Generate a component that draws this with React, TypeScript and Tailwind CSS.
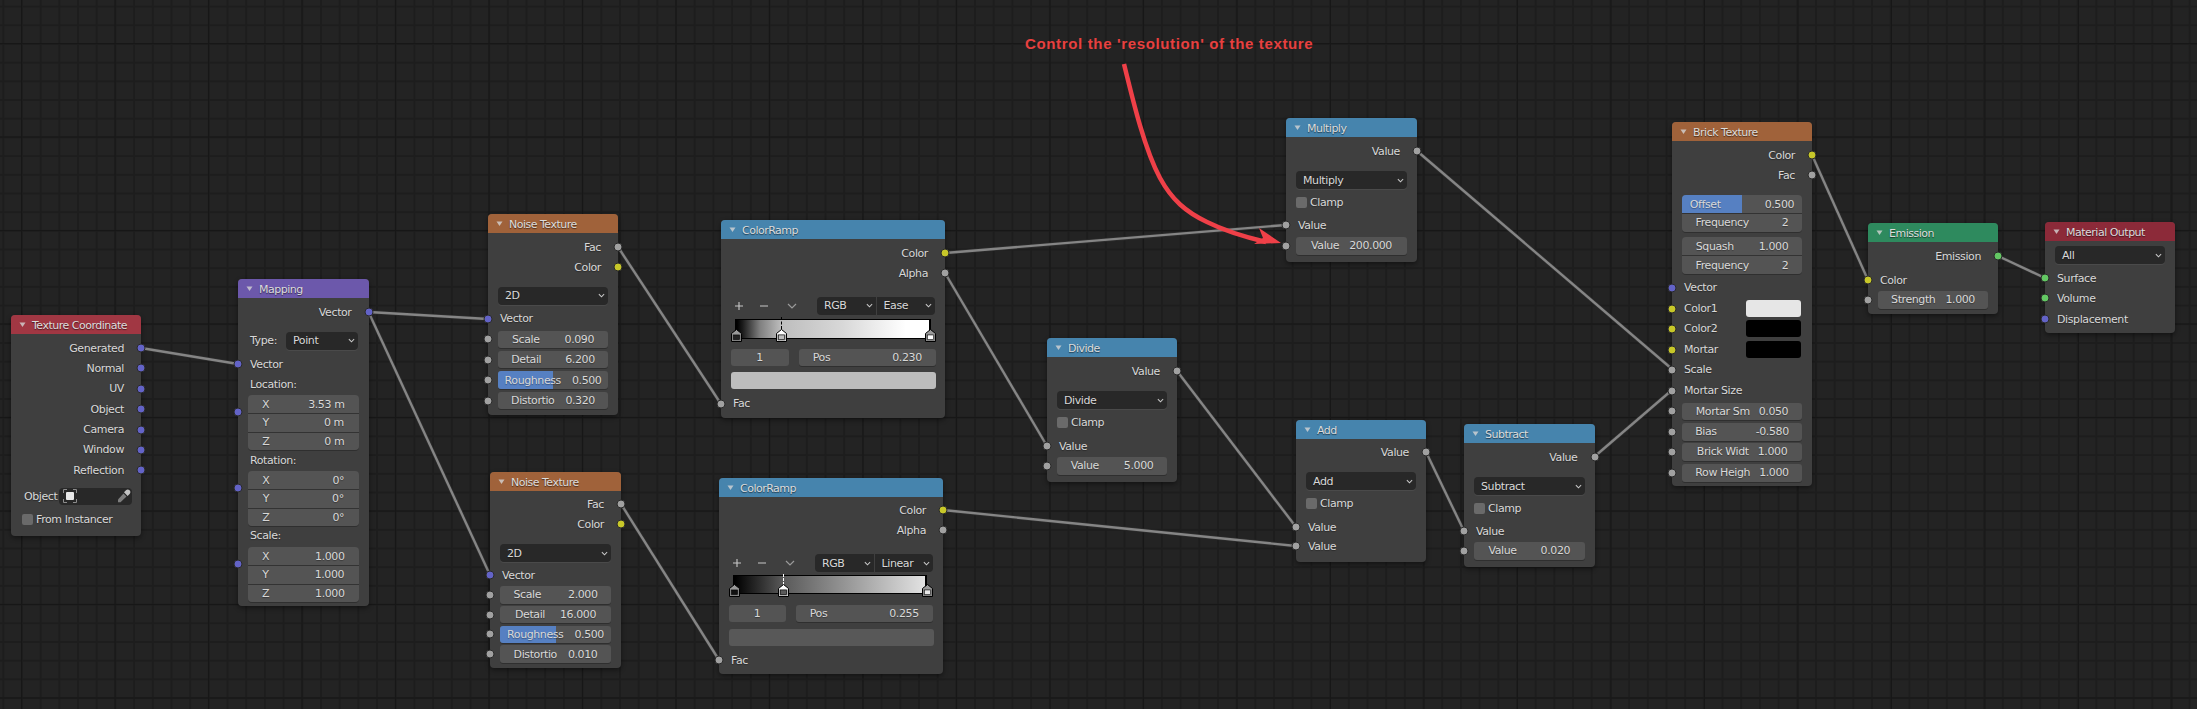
import React from "react";

const SOCK = {
  v: "bg-[#6363c7]",
  g: "bg-[#a1a1a1]",
  y: "bg-[#c7c729]",
  s: "bg-[#63c763]",
} as const;
type S = keyof typeof SOCK;

const GAP = "mt-[2.4px]";

function Sock({ c, side = "l", cls = "top-1/2" }: { c: S; side?: "l" | "r"; cls?: string }) {
  return (
    <span
      className={`absolute ${cls} ${side === "l" ? "left-0 -translate-x-1/2" : "right-0 translate-x-1/2"} -translate-y-1/2 w-[9px] h-[9px] rounded-full border border-[#2a2a2a] ${SOCK[c]} z-10`}
    />
  );
}

function Tri() {
  return (
    <svg width="7" height="7" viewBox="0 0 7 7" className="shrink-0">
      <path d="M0.5 1.5H6.5L3.5 6Z" fill="#d4d4d4" fillOpacity="0.8" />
    </svg>
  );
}

function Chev({ color = "#c8c8c8", size = 7 }: { color?: string; size?: number }) {
  return (
    <svg width={size} height={size} viewBox="0 0 8 8" className="shrink-0">
      <path d="M1 2.5L4 5.5L7 2.5" fill="none" stroke={color} strokeWidth="1.2" />
    </svg>
  );
}

function Node({
  pos,
  head,
  title,
  children,
}: {
  pos: string;
  head: string;
  title: string;
  children: React.ReactNode;
}) {
  return (
    <div className={`absolute ${pos} flex flex-col rounded-[4px] bg-[#3f3f3f] shadow-[0_2px_5px_rgba(0,0,0,0.45)]`}>
      <div className={`h-[19px] shrink-0 flex items-center gap-[6px] pl-[8px] rounded-t-[4px] ${head}`}>
        <Tri />
        <span className="text-[#dcdcdc] whitespace-nowrap pt-[1px] tracking-[-0.5px] [text-shadow:0_1px_1px_rgba(0,0,0,0.55)]">{title}</span>
      </div>
      {children}
    </div>
  );
}

function Out({ label, c, cls = GAP }: { label: string; c: S; cls?: string }) {
  return (
    <div className={`relative h-[18px] shrink-0 flex items-center justify-end pr-[17px] ${cls}`}>
      <span className="whitespace-nowrap">{label}</span>
      <Sock c={c} side="r" />
    </div>
  );
}

function In({ label, c, cls = GAP, children }: { label: string; c?: S; cls?: string; children?: React.ReactNode }) {
  return (
    <div className={`relative h-[18px] shrink-0 flex items-center pl-[12px] ${cls}`}>
      <span className="whitespace-nowrap">{label}</span>
      {children}
      {c && <Sock c={c} />}
    </div>
  );
}

function Field({
  label,
  value,
  gap,
  cut = "rounded-[3px] shadow-[0_1px_0_rgba(0,0,0,0.25)]",
  fill,
}: {
  label?: string;
  value: string;
  gap: string;
  cut?: string;
  fill?: boolean;
}) {
  return (
    <div className={`relative flex-1 min-w-0 h-[17.4px] bg-[#545454] flex items-center justify-center overflow-hidden ${gap} ${cut}`}>
      {fill && <span className="absolute left-0 top-0 bottom-0 w-1/2 bg-[#5680c2]" />}
      {label && <span className="relative whitespace-nowrap">{label}</span>}
      <span className="relative whitespace-nowrap">{value}</span>
    </div>
  );
}

function FRow({
  label,
  value,
  gap,
  cls = GAP,
  c = "g",
  fill,
}: {
  label: string;
  value: string;
  gap: string;
  cls?: string;
  c?: S;
  fill?: boolean;
}) {
  return (
    <div className={`relative h-[18px] shrink-0 flex items-center px-[10px] ${cls}`}>
      <Field label={label} value={value} gap={gap} fill={fill} />
      <Sock c={c} />
    </div>
  );
}

function Stack({
  rows,
  cls,
  c,
  itemH = "h-[18.33px]",
}: {
  rows: { l: string; v: string; g: string; fill?: boolean }[];
  cls: string;
  c?: S;
  itemH?: string;
}) {
  return (
    <div className={`relative shrink-0 px-[10px] ${cls}`}>
      <div className="flex flex-col rounded-[4px] overflow-hidden shadow-[0_1px_0_rgba(0,0,0,0.25)]">
        {rows.map((r, i) => (
          <div key={i} className={`flex items-stretch ${itemH} ${i > 0 ? "border-t border-[#333]" : ""}`}>
            <div className="relative flex-1 min-w-0 bg-[#545454] flex items-center justify-center overflow-hidden">
              {r.fill && <span className="absolute left-0 top-0 bottom-0 w-1/2 bg-[#5680c2]" />}
              <span className={`relative flex items-center ${r.g}`}>
                <span className="whitespace-nowrap">{r.l}</span>
                <span className="whitespace-nowrap">{r.v}</span>
              </span>
            </div>
          </div>
        ))}
      </div>
      {c && <Sock c={c} cls="top-[17px]" />}
    </div>
  );
}

function DD({ label, cls = "" }: { label: string; cls?: string }) {
  return (
    <div className={`h-[18px] rounded-[4px] bg-[#282828] flex items-center justify-between pl-[7px] pr-[3px] shadow-[0_1px_0_rgba(255,255,255,0.06)] ${cls}`}>
      <span className="whitespace-nowrap">{label}</span>
      <Chev />
    </div>
  );
}

function DRow({ label, cls }: { label: string; cls: string }) {
  return (
    <div className={`shrink-0 px-[10px] ${cls}`}>
      <DD label={label} />
    </div>
  );
}

function Check({ label, cls = "mt-[4px]" }: { label: string; cls?: string }) {
  return (
    <div className={`h-[18px] shrink-0 flex items-center gap-[3px] pl-[10px] ${cls}`}>
      <span className="w-[11px] h-[11px] rounded-[2px] bg-[#6a6a6a]" />
      <span className="whitespace-nowrap">{label}</span>
    </div>
  );
}

function Handle({ active, color, pos }: { active?: boolean; color: string; pos: string }) {
  return (
    <svg width="11" height="13" viewBox="0 0 11 13" className={`absolute ${pos}`}>
      <path d="M5.5 0.5L10.5 4.5V12.5H0.5V4.5Z" fill={active ? "#fff" : "#9a9a9a"} stroke="#000" strokeWidth="1" />
      <rect x="1.5" y="5.5" width="8" height="6" fill="#6a6a6a" />
      <rect x="2.5" y="6" width="6" height="4.5" fill={color} stroke="#000" strokeWidth="0.5" />
    </svg>
  );
}

function RampBar({
  width,
  h,
  cls,
  grad,
  kids,
}: {
  width: string;
  h: string;
  cls: string;
  grad: string;
  kids: React.ReactNode;
}) {
  return (
    <div className={`relative ml-[14px] shrink-0 ${width} ${h} ${cls}`}>
      <div className={`w-full h-full border-x-2 border-y border-black ${grad}`} />
      {kids}
    </div>
  );
}

function RampTools({ mode, cls, lw }: { mode: string; cls: string; lw: string }) {
  return (
    <div className={`relative h-[18px] shrink-0 flex items-center pl-[14px] pr-[10px] ${cls}`}>
      <svg width="70" height="12" viewBox="0 0 70 12" className="shrink-0">
        <path d="M4 2V10M0 6H8M25 6H33" stroke="#c8c8c8" strokeWidth="1.1" fill="none" />
        <path d="M53 4L57 8L61 4" stroke="#9a9a9a" strokeWidth="1.2" fill="none" />
      </svg>
      <div className={`ml-auto flex ${lw} rounded-[4px] overflow-hidden bg-[#282828]`}>
        <div className="flex-1 flex items-center justify-between pl-[7px] pr-[3px] h-[18px] border-r border-[#3f3f3f]">
          <span>RGB</span>
          <Chev />
        </div>
        <div className="flex-1 flex items-center justify-between pl-[7px] pr-[3px] h-[18px]">
          <span>{mode}</span>
          <Chev />
        </div>
      </div>
    </div>
  );
}

const LINKS: [number, number, number, number][] = [
  [141, 348, 238, 364],
  [368.5, 312, 488, 319],
  [368.5, 312, 490, 575],
  [618, 247, 721, 404],
  [621, 504, 719, 660],
  [945, 253, 1286, 225],
  [945, 273, 1047, 446],
  [943, 510, 1296, 546],
  [1177, 371, 1296, 527],
  [1426, 452, 1464, 531],
  [1594, 457, 1672, 390],
  [1417, 151, 1672, 369],
  [1812, 155, 1868, 280],
  [1998, 256, 2045, 278],
];

export default function App() {
  return (
    <div className="relative w-[2197px] h-[709px] overflow-hidden bg-[#232323] bg-[image:linear-gradient(#171717_1px,transparent_1px),linear-gradient(90deg,#171717_1px,transparent_1px),linear-gradient(#1d1d1d_1.5px,transparent_1.5px),linear-gradient(90deg,#1d1d1d_1.5px,transparent_1.5px)] bg-[size:93.5px_93.5px,93.5px_93.5px,18.7px_18.7px,18.7px_18.7px] bg-[position:0_43px,21px_0,0_5.6px,2.3px_0] font-['DejaVu_Sans',sans-serif] text-[11px] tracking-[-0.4px] leading-none text-[#d8d8d8] [text-shadow:0_1px_1px_rgba(0,0,0,0.35)]">
      <svg width="2197" height="709" className="absolute left-0 top-0">
        {LINKS.map(([a, b, c, d], i) => (
          <g key={i}>
            <line x1={a} y1={b} x2={c} y2={d} stroke="#2c2c2c" strokeWidth="4" />
            <line x1={a} y1={b} x2={c} y2={d} stroke="#858585" strokeWidth="2.4" />
          </g>
        ))}
      </svg>

      <Node pos="left-[11px] top-[315px] w-[130px] h-[221px]" head="bg-[#a13743]" title="Texture Coordinate">
        <Out label="Generated" c="v" cls="mt-[5px]" />
        <Out label="Normal" c="v" />
        <Out label="UV" c="v" />
        <Out label="Object" c="v" />
        <Out label="Camera" c="v" />
        <Out label="Window" c="v" />
        <Out label="Reflection" c="v" />
        <div className="h-[17px] shrink-0 flex items-center gap-[2px] pl-[13px] mt-[8.5px]">
          <span>Object</span>
          <div className="w-[73px] h-[17px] rounded-[4px] bg-[#282828] flex items-center justify-between pl-[4px] pr-[1px]">
            <svg width="14" height="14" viewBox="0 0 14 14">
              <rect x="3" y="3" width="8" height="8" rx="1" fill="#e8e8e8" />
              <path d="M0.5 4V0.5H4M10 0.5H13.5V4M13.5 10V13.5H10M4 13.5H0.5V10" fill="none" stroke="#8c8c8c" />
            </svg>
            <svg width="14" height="14" viewBox="0 0 14 14">
              <path d="M9 1.2C10 .2 11.5 .2 12.6 1.3C13.7 2.4 13.7 3.9 12.6 4.9L10.6 6.9L7 3.3Z" fill="#c4c4c4" />
              <path d="M6.5 4.5L9.5 7.5L3.5 13.2H1V10.5Z" fill="#7d7d7d" />
            </svg>
          </div>
        </div>
        <Check label="From Instancer" cls="mt-[5.5px] !pl-[11px]" />
      </Node>

      <Node pos="left-[238px] top-[279px] w-[130.5px] h-[327px]" head="bg-[#6c58ab]" title="Mapping">
        <Out label="Vector" c="v" cls="mt-[5px]" />
        <div className="h-[18px] shrink-0 mt-[10.5px] flex items-center pl-[12px] pr-[10.5px] justify-between">
          <span>Type:</span>
          <DD label="Point" cls="w-[72px]" />
        </div>
        <In label="Vector" c="v" cls="mt-[5.5px]" />
        <In label="Location:" cls="mt-[2px]" />
        <Stack
          cls="mt-[2px]"
          c="v"
          rows={[
            { l: "X", v: "3.53 m", g: "gap-[39px]" },
            { l: "Y", v: "0 m", g: "gap-[55px]" },
            { l: "Z", v: "0 m", g: "gap-[55px]" },
          ]}
        />
        <In label="Rotation:" cls="mt-[2px]" />
        <Stack
          cls="mt-[1px]"
          c="v"
          rows={[
            { l: "X", v: "0°", g: "gap-[63px]" },
            { l: "Y", v: "0°", g: "gap-[63px]" },
            { l: "Z", v: "0°", g: "gap-[63px]" },
          ]}
        />
        <In label="Scale:" cls="mt-[1px]" />
        <Stack
          cls="mt-[2px]"
          c="v"
          rows={[
            { l: "X", v: "1.000", g: "gap-[46px]" },
            { l: "Y", v: "1.000", g: "gap-[46px]" },
            { l: "Z", v: "1.000", g: "gap-[46px]" },
          ]}
        />
      </Node>

      <Node pos="left-[488px] top-[214px] w-[130px] h-[201px]" head="bg-[#a0623a]" title="Noise Texture">
        <Out label="Fac" c="g" cls="mt-[5px]" />
        <Out label="Color" c="y" />
        <DRow label="2D" cls="mt-[10.6px]" />
        <In label="Vector" c="v" cls="mt-[5px]" />
        <FRow label="Scale" value="0.090" gap="gap-[25px]" />
        <FRow label="Detail" value="6.200" gap="gap-[24px]" />
        <FRow label="Roughness" value="0.500" gap="gap-[11px]" fill />
        <FRow label="Distortio" value="0.320" gap="gap-[11px]" />
      </Node>

      <Node pos="left-[490px] top-[472px] w-[131px] h-[196px]" head="bg-[#a0623a]" title="Noise Texture">
        <Out label="Fac" c="g" cls="mt-[4px]" />
        <Out label="Color" c="y" cls="mt-[2px]" />
        <DRow label="2D" cls="mt-[11px]" />
        <In label="Vector" c="v" cls="mt-[4px]" />
        <FRow label="Scale" value="2.000" gap="gap-[27px]" cls="mt-[2px]" />
        <FRow label="Detail" value="16.000" gap="gap-[15px]" cls="mt-[1.7px]" />
        <FRow label="Roughness" value="0.500" gap="gap-[11px]" cls="mt-[1.7px]" fill />
        <FRow label="Distortio" value="0.010" gap="gap-[11px]" cls="mt-[1.7px]" />
      </Node>

      <Node pos="left-[721px] top-[220px] w-[224px] h-[198px]" head="bg-[#4684ad]" title="ColorRamp">
        <Out label="Color" c="y" cls="mt-[5px]" />
        <Out label="Alpha" c="g" cls="mt-[2px]" />
        <RampTools mode="Ease" cls="mt-[14.5px]" lw="w-[118px]" />
        <RampBar
          width="w-[196px]"
          h="h-[20px]"
          cls="mt-[4.5px]"
          grad="bg-[linear-gradient(90deg,#000_0%,#1c1c1c_3%,#808080_12%,#bdbdbd_23%,#d8d8d8_55%,#fff_88%)]"
          kids={
            <>
              <span className="absolute left-[45.5px] -top-[2px] h-[12px] border-l border-dashed border-black" />
              <Handle color="#222" pos="left-[-4px] top-[10px]" />
              <Handle color="#bdbdbd" active pos="left-[40.5px] top-[10px]" />
              <Handle color="#fff" pos="left-[189.5px] top-[10px]" />
            </>
          }
        />
        <div className="h-[18px] shrink-0 mt-[9.5px] flex gap-[10px] pl-[9.5px] pr-[9px]">
          <Field value="1" gap="" cut="rounded-[3px] !flex-none w-[58px]" />
          <Field label="Pos" value="0.230" gap="gap-[62px]" />
        </div>
        <div className="h-[17.5px] shrink-0 mt-[5px] mx-[9.5px] rounded-[3px] bg-[#bdbdbd]" />
        <In label="Fac" c="g" cls="mt-[5.5px]" />
      </Node>

      <Node pos="left-[719px] top-[478px] w-[224px] h-[196px]" head="bg-[#4684ad]" title="ColorRamp">
        <Out label="Color" c="y" cls="mt-[4px]" />
        <Out label="Alpha" c="g" cls="mt-[2px]" />
        <RampTools mode="Linear" cls="mt-[15px]" lw="w-[118px]" />
        <RampBar
          width="w-[194px]"
          h="h-[19px]"
          cls="mt-[3px]"
          grad="bg-[linear-gradient(90deg,#000_0%,#5a5a5a_25.5%,#e2e2e2_100%)]"
          kids={
            <>
              <span className="absolute left-[49.5px] -top-[1px] h-[11px] border-l border-dashed border-white" />
              <Handle color="#111" pos="left-[-4px] top-[9px]" />
              <Handle color="#5a5a5a" active pos="left-[44.5px] top-[9px]" />
              <Handle color="#e8e8e8" pos="left-[188.5px] top-[9px]" />
            </>
          }
        />
        <div className="h-[18px] shrink-0 mt-[11px] flex gap-[10px] pl-[9.5px] pr-[10px]">
          <Field value="1" gap="" cut="rounded-[3px] !flex-none w-[57px]" />
          <Field label="Pos" value="0.255" gap="gap-[62px]" />
        </div>
        <div className="h-[16.5px] shrink-0 mt-[6px] mx-[9.5px] rounded-[3px] bg-[#585858]" />
        <In label="Fac" c="g" cls="mt-[5.5px]" />
      </Node>

      <Node pos="left-[1047px] top-[338px] w-[130px] h-[144px]" head="bg-[#4684ad]" title="Divide">
        <Out label="Value" c="g" cls="mt-[5px]" />
        <DRow label="Divide" cls="mt-[11px]" />
        <Check label="Clamp" />
        <In label="Value" c="g" cls="mt-[6px]" />
        <FRow label="Value" value="5.000" gap="gap-[25px]" cls="mt-[2px]" />
      </Node>

      <Node pos="left-[1296px] top-[420px] w-[130px] h-[142px]" head="bg-[#4684ad]" title="Add">
        <Out label="Value" c="g" cls="mt-[4px]" />
        <DRow label="Add" cls="mt-[11px]" />
        <Check label="Clamp" />
        <In label="Value" c="g" cls="mt-[6px]" />
        <In label="Value" c="g" cls="mt-[1px]" />
      </Node>

      <Node pos="left-[1464px] top-[424px] w-[130.5px] h-[143px]" head="bg-[#4684ad]" title="Subtract">
        <Out label="Value" c="g" cls="mt-[5px]" />
        <DRow label="Subtract" cls="mt-[11px]" />
        <Check label="Clamp" />
        <In label="Value" c="g" cls="mt-[5px]" />
        <FRow label="Value" value="0.020" gap="gap-[24px]" cls="mt-[2px]" />
      </Node>

      <Node pos="left-[1286px] top-[118px] w-[131px] h-[144px]" head="bg-[#4684ad]" title="Multiply">
        <Out label="Value" c="g" cls="mt-[5px]" />
        <DRow label="Multiply" cls="mt-[11px]" />
        <Check label="Clamp" />
        <In label="Value" c="g" cls="mt-[5px]" />
        <FRow label="Value" value="200.000" gap="gap-[10px]" cls="mt-[3px]" />
      </Node>

      <Node pos="left-[1672px] top-[122px] w-[140px] h-[364px]" head="bg-[#a0623a]" title="Brick Texture">
        <Out label="Color" c="y" cls="mt-[5px]" />
        <Out label="Fac" c="g" cls="mt-[2px]" />
        <Stack
          cls="mt-[11px]"
          rows={[
            { l: "Offset", v: "0.500", g: "gap-[44px]", fill: true },
            { l: "Frequency", v: "2", g: "gap-[33px]" },
          ]}
        />
        <Stack
          cls="mt-[5.5px]"
          rows={[
            { l: "Squash", v: "1.000", g: "gap-[25px]" },
            { l: "Frequency", v: "2", g: "gap-[33px]" },
          ]}
        />
        <In label="Vector" c="v" cls="mt-[5px]" />
        <In label="Color1" c="y" cls="mt-[3px]">
          <span className="absolute right-[11px] top-[0.5px] w-[55px] h-[16.5px] rounded-[3px] bg-[#e6e6e6]" />
        </In>
        <In label="Color2" c="y" cls="mt-[2px]">
          <span className="absolute right-[11px] top-[0.5px] w-[55px] h-[17px] rounded-[3px] bg-black" />
        </In>
        <In label="Mortar" c="y" cls="mt-[3px]">
          <span className="absolute right-[11px] top-[0.5px] w-[55px] h-[16.5px] rounded-[3px] bg-black" />
        </In>
        <In label="Scale" c="g" cls="mt-[2px]" />
        <In label="Mortar Size" c="g" cls="mt-[3px]" />
        <FRow label="Mortar Sm" value="0.050" gap="gap-[9px]" cls="mt-[2.5px]" />
        <FRow label="Bias" value="-0.580" gap="gap-[39px]" cls="mt-[2.5px]" />
        <FRow label="Brick Widt" value="1.000" gap="gap-[9px]" cls="mt-[2px]" />
        <FRow label="Row Heigh" value="1.000" gap="gap-[9px]" cls="mt-[3px]" />
      </Node>

      <Node pos="left-[1868px] top-[223px] w-[130px] h-[91px]" head="bg-[#2e8a5e]" title="Emission">
        <Out label="Emission" c="s" cls="mt-[5px]" />
        <In label="Color" c="y" cls="mt-[6px]" />
        <FRow label="Strength" value="1.000" gap="gap-[10px]" cls="mt-[2px]" />
      </Node>

      <Node pos="left-[2045px] top-[222px] w-[130px] h-[111px]" head="bg-[#8c2a39]" title="Material Output">
        <DRow label="All" cls="mt-[5px]" />
        <In label="Surface" c="s" cls="mt-[5px]" />
        <In label="Volume" c="s" cls="mt-[2px]" />
        <In label="Displacement" c="v" cls="mt-[3px]" />
      </Node>

      <div className="absolute left-[1025px] top-[35px] font-['Liberation_Sans',sans-serif] font-bold text-[15px] leading-[18px] tracking-[0.65px] text-[#e8403f] [text-shadow:none] whitespace-nowrap">
        Control the 'resolution' of the texture
      </div>

      <svg width="2197" height="709" className="absolute left-0 top-0 pointer-events-none">
        <path
          d="M1124 64C1134 105 1145 150 1160 178C1172 200 1186 212 1207 222C1225 231 1245 237 1266 242"
          fill="none"
          stroke="#ef4048"
          strokeWidth="4.5"
        />
        <path d="M1281 243L1259 228L1263 238L1254 244Z" fill="#ef4048" />
      </svg>
    </div>
  );
}
